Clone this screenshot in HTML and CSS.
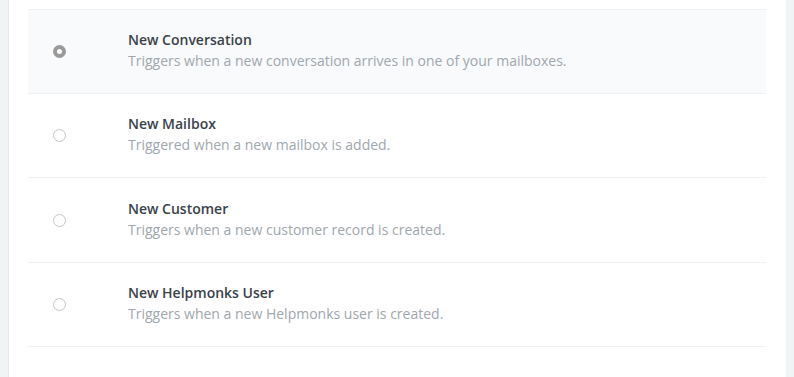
FILE: index.html
```html
<!DOCTYPE html>
<html lang="en">
<head>
<meta charset="UTF-8" />
<meta name="viewport" content="width=device-width, initial-scale=1" />
<link rel="stylesheet" href="styles.css">
</head>
<body>

<div class="panel">
  <div class="trigger-list" role="radiogroup">
    <label class="trigger selected">
      <span class="radio checked"></span>
      <span class="info">
        <span class="title">New Conversation</span>
        <span class="desc">Triggers when a new conversation arrives in one of your mailboxes.</span>
      </span>
    </label>
    <label class="trigger">
      <span class="radio"></span>
      <span class="info">
        <span class="title">New Mailbox</span>
        <span class="desc">Triggered when a new mailbox is added.</span>
      </span>
    </label>
    <label class="trigger">
      <span class="radio"></span>
      <span class="info">
        <span class="title">New Customer</span>
        <span class="desc">Triggers when a new customer record is created.</span>
      </span>
    </label>
    <label class="trigger">
      <span class="radio"></span>
      <span class="info">
        <span class="title">New Helpmonks User</span>
        <span class="desc">Triggers when a new Helpmonks user is created.</span>
      </span>
    </label>
  </div>
</div>

</body>
</html>
```

FILE: styles.css
```css
html, body {
  height: 100%;
}

body {
  margin: 0;
  background: #f1f4f5;
  font-family: "Open Sans", "Liberation Sans", sans-serif;
  font-size: 14px;
  color: #333;
}

.panel {
  margin: 0 8px;
  min-height: 100%;
  background: #fff;
  border-left: 1px solid #e6eaeb;
  padding: 9px 20px 0 19px;
  box-sizing: border-box;
}

.trigger-list {
  border-top: 1px solid #eef0f1;
}

.trigger {
  display: flex;
  align-items: center;
  height: 83px;
  border-bottom: 1px solid #eef0f1;
  cursor: pointer;
}

.trigger:nth-child(3) {
  height: 84px;
}

.trigger.selected {
  background: #f9fafb;
}

.radio {
  width: 11px;
  height: 11px;
  border: 1px solid #c6c6c6;
  border-radius: 50%;
  background: #fff;
  margin: 0 62px 0 25px;
  flex-shrink: 0;
  box-sizing: content-box;
}

.radio.checked {
  width: 5px;
  height: 5px;
  border: 4px solid #9a9a9a;
  background: #fff;
}

.info {
  display: flex;
  flex-direction: column;
  gap: 1px;
  margin-top: -2px;
}

.title {
  font-weight: 600;
  line-height: 20px;
  color: #39424a;
}

.desc {
  line-height: 20px;
  color: #a0a7ad;
}
```
